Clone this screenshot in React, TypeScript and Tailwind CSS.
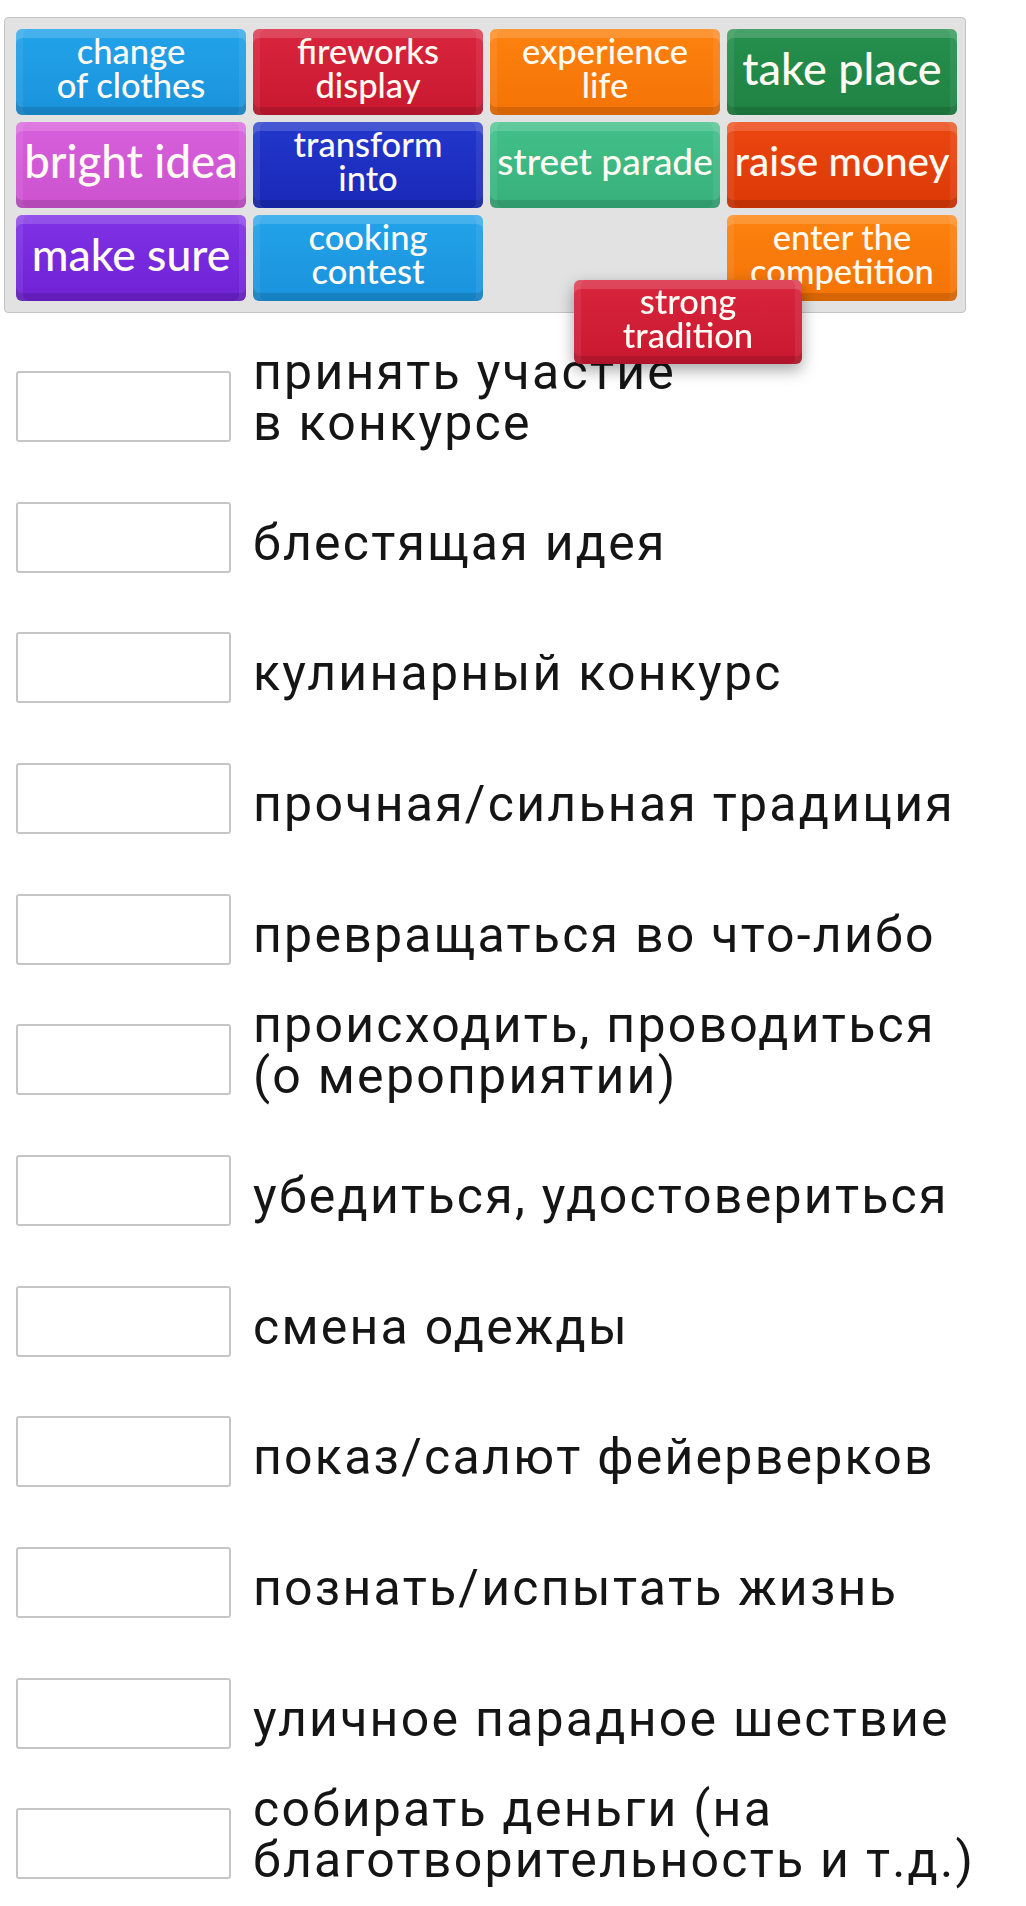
import React from 'react';

interface Tile {
  label: string;
  face: string;
  size: string;
}

// bevel shading shared by every tile
const BEVEL =
  'shadow-[inset_0_9px_0_rgba(255,255,255,0.16),inset_0_-8px_0_rgba(0,0,0,0.12),inset_7px_0_0_rgba(255,255,255,0.07),inset_-7px_0_0_rgba(255,255,255,0.07)]';

const TWO_LINE = 'text-[34.5px] leading-[34px]';

const TILES: (Tile | null)[] = [
  { label: 'change\nof clothes', face: 'bg-linear-to-b from-[#22a3ea] to-[#1a92dc]', size: TWO_LINE },
  { label: 'fireworks\ndisplay', face: 'bg-linear-to-b from-[#d9253d] to-[#c81830]', size: TWO_LINE },
  { label: 'experience\nlife', face: 'bg-linear-to-b from-[#fd820f] to-[#f47306]', size: TWO_LINE },
  { label: 'take place', face: 'bg-linear-to-b from-[#25904d] to-[#1f8243]', size: 'text-[45px] leading-[46px]' },
  { label: 'bright idea', face: 'bg-linear-to-b from-[#d860dc] to-[#cc52d0]', size: 'text-[45.5px] leading-[46px]' },
  { label: 'transform\ninto', face: 'bg-linear-to-b from-[#2237cc] to-[#1a29b8]', size: TWO_LINE },
  { label: 'street parade', face: 'bg-linear-to-b from-[#42c08a] to-[#38b07c]', size: 'text-[37px] leading-[40px]' },
  { label: 'raise money', face: 'bg-linear-to-b from-[#ec4610] to-[#dc3907]', size: 'text-[40.5px] leading-[44px]' },
  { label: 'make sure', face: 'bg-linear-to-b from-[#8032e6] to-[#6f22d4]', size: 'text-[44.5px] leading-[46px]' },
  { label: 'cooking\ncontest', face: 'bg-linear-to-b from-[#22a3ea] to-[#1a92dc]', size: TWO_LINE },
  null,
  { label: 'enter the\ncompetition', face: 'bg-linear-to-b from-[#fd820f] to-[#f47306]', size: TWO_LINE },
];

const ROWS: string[] = [
  'принять участие\nв конкурсе',
  'блестящая идея',
  'кулинарный конкурс',
  'прочная/сильная традиция',
  'превращаться во что-либо',
  'происходить, проводиться\n(о мероприятии)',
  'убедиться, удостовериться',
  'смена одежды',
  'показ/салют фейерверков',
  'познать/испытать жизнь',
  'уличное парадное шествие',
  'собирать деньги (на\nблаготворительность и т.д.)',
];

function TileBox({ tile, className = '' }: { tile: Tile; className?: string }) {
  return (
    <div
      className={`${tile.face} ${BEVEL} ${className} rounded-[6px] pb-[9px] flex items-center justify-center text-center text-[#fffaf2] font-medium [font-family:Lato,'Noto_Sans',sans-serif]`}
    >
      <span className={`${tile.size} whitespace-pre`}>{tile.label}</span>
    </div>
  );
}

export default function App() {
  return (
    <div className="min-h-screen bg-white pb-6">
      {/* word bank */}
      <div className="relative ml-[4px] mt-[17px] w-[962px] rounded-[4px] border border-[#c4c4c4] bg-[#e2e2e2] p-[11px]">
        <div className="grid grid-cols-[repeat(4,230px)] grid-rows-[repeat(3,86px)] gap-[7px]">
          {TILES.map((t, i) => (t ? <TileBox key={i} tile={t} /> : <div key={i} />))}
        </div>
        <TileBox
          tile={{ label: 'strong\ntradition', face: 'bg-linear-to-b from-[#d9253d] to-[#c81830]', size: TWO_LINE }}
          className="absolute left-[569px] top-[262px] w-[228px] h-[84px] z-10 drop-shadow-[0_6px_8px_rgba(0,0,0,0.35)]"
        />
      </div>

      {/* answer rows */}
      <div className="mt-[28px] flex flex-col">
        {ROWS.map((text, i) => {
          const twoLines = text.includes('\n');
          return (
            <div key={i} className="flex h-[130.7px] items-center">
              <div className="ml-[16px] h-[71px] w-[215px] shrink-0 rounded-[3px] border-2 border-[#c6c6c6] bg-white" />
              <p
                className={`ml-[22px] whitespace-pre-line text-[50px] leading-[51px] tracking-[0.045em] text-[#151515] [font-family:Roboto,'Liberation_Sans',sans-serif] ${
                  twoLines ? 'mb-[17px]' : 'mt-[12px]'
                }`}
              >
                {text}
              </p>
            </div>
          );
        })}
      </div>
    </div>
  );
}
